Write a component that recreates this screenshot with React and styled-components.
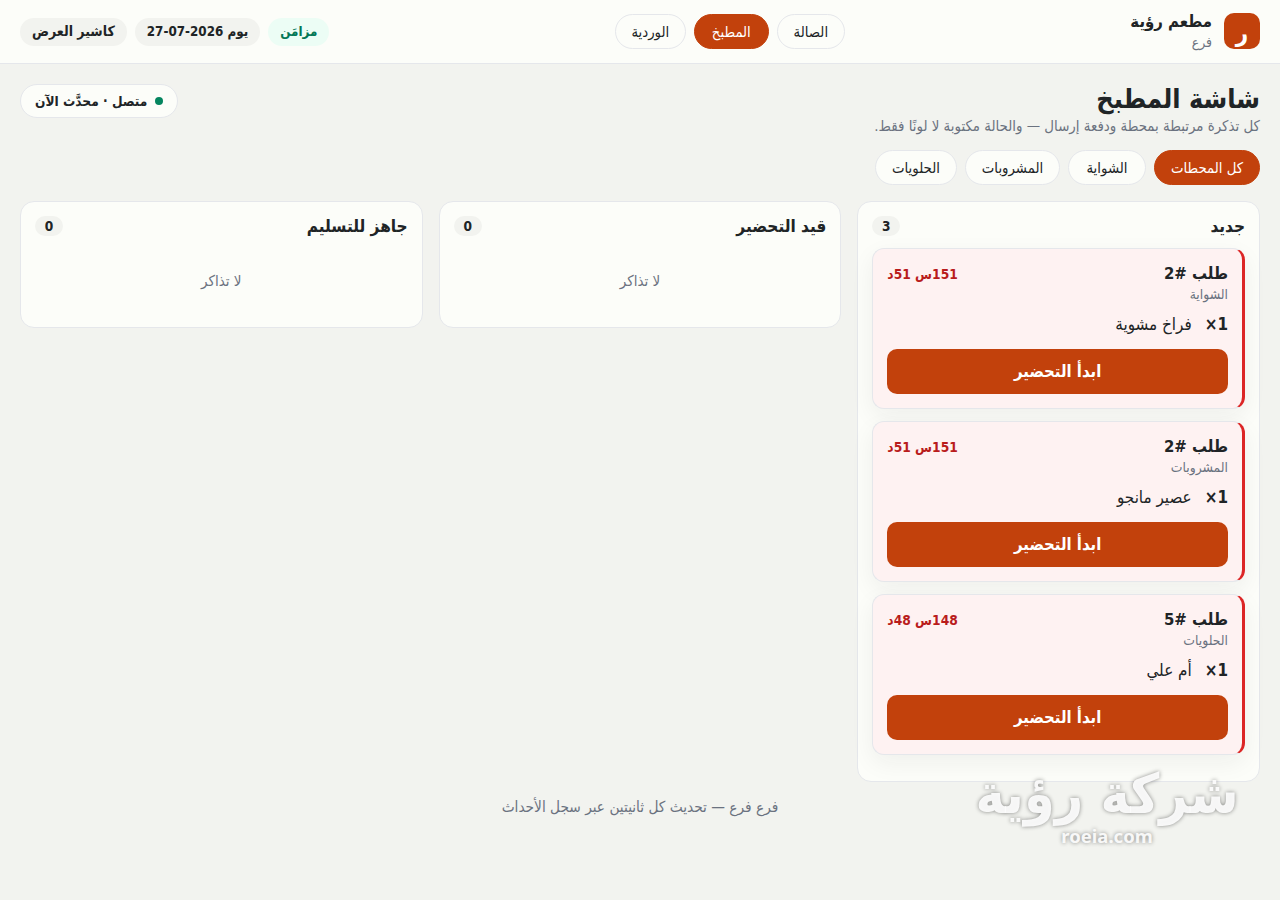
import React, { useState } from "react";
import styled, { createGlobalStyle } from "styled-components";

const GlobalStyle = createGlobalStyle`
  * { box-sizing: border-box; }

  body {
    margin: 0;
    min-height: 100vh;
    background: #f2f3ef;
    color: #202426;
    font-family: "DejaVu Sans Condensed", "DejaVu Sans", sans-serif;
    font-size: 16px;
    line-height: 1.5;
    overflow: hidden;
  }

  button { font-family: inherit; cursor: pointer; }
`;

const TopBar = styled.header`
  height: 64px;
  padding: 0 20px;
  display: flex;
  align-items: center;
  justify-content: space-between;
  background: #fcfdf9;
  border-bottom: 1px solid #e5e7eb;
`;

const Brand = styled.div`
  display: flex;
  align-items: center;
  gap: 12px;
`;

const Logo = styled.div`
  width: 36px;
  height: 36px;
  margin-bottom: 2px;
  padding-top: 4px;
  display: grid;
  place-items: center;
  border-radius: 10px;
  background: #c2410c;
  color: #fff;
  font-size: 24px;
  font-weight: 700;
  line-height: 32px;
`;

const BrandName = styled.div`
  font-size: 16.6px;
  font-weight: 600;
  line-height: 22px;
`;

const BranchName = styled.div`
  margin-top: -1px;
  font-size: 13.8px;
  line-height: 20px;
  color: #6b7280;
`;

const PillRow = styled.div`
  display: flex;
  gap: 8px;
`;

const Pill = styled.button`
  width: ${(p) => p.$width}px;
  height: 35px;
  padding: 2px 0 0;
  border: 1px solid ${(p) => (p.$active ? "#c2410c" : "#e5e7eb")};
  border-radius: 999px;
  background: ${(p) => (p.$active ? "#c2410c" : "#fcfdf9")};
  color: ${(p) => (p.$active ? "#fff" : "#202426")};
  font-size: 14.8px;
  line-height: 1.5;
`;

const Badge = styled.span`
  height: 28px;
  padding: 0 12px;
  display: flex;
  align-items: center;
  border-radius: 999px;
  background: ${(p) => (p.$synced ? "#ecfdf5" : "#f2f3ef")};
  color: ${(p) => (p.$synced ? "#047857" : "#202426")};
  font-size: ${(p) => p.$size || 13.3}px;
  font-weight: 600;
`;

const Main = styled.main`
  padding: 20px;
`;

const PageHead = styled.div`
  height: 51px;
  display: flex;
  justify-content: space-between;
  align-items: flex-start;
`;

const Title = styled.h1`
  margin: 0;
  font-size: 26.8px;
  font-weight: 700;
  line-height: 30px;
`;

const Subtitle = styled.p`
  margin: 2px 0 0;
  font-size: 14.88px;
  line-height: 21px;
  color: #6b7280;
`;

const LiveStatus = styled.div`
  height: 34px;
  padding: 0 14px;
  display: flex;
  align-items: center;
  gap: 8px;
  border: 1px solid #e5e7eb;
  border-radius: 999px;
  background: #fcfdf9;
  font-size: 13.6px;
  font-weight: 600;
`;

const Dot = styled.span`
  width: 8px;
  height: 8px;
  border-radius: 50%;
  background: #04855f;
`;

const Stations = styled(PillRow)`
  margin: 15px 0 16px;
`;

const Board = styled.div`
  display: grid;
  grid-template-columns: repeat(3, 1fr);
  gap: 16px;
  align-items: start;
`;

const Column = styled.section`
  padding: 14px;
  border: 1px solid #e5e7eb;
  border-radius: 14px;
  background: #fcfdf9;
`;

const ColumnHead = styled.div`
  height: 20px;
  margin-bottom: 12px;
  display: flex;
  align-items: center;
  justify-content: space-between;
`;

const ColumnTitle = styled.h2`
  margin: 0;
  font-size: 17.1px;
  font-weight: 600;
  line-height: 20px;
`;

const Count = styled.span`
  min-width: 28px;
  height: 20px;
  border-radius: 999px;
  background: #f2f3ef;
  font-size: 13.6px;
  font-weight: 700;
  line-height: 21px;
  text-align: center;
`;

const Empty = styled.p`
  margin: 0;
  padding: 23px 0 21px;
  font-size: 15px;
  line-height: 21px;
  color: #6b7280;
  text-align: center;
`;

const Ticket = styled.article`
  height: 161px;
  margin-bottom: 12px;
  padding: 14px;
  border: 1px solid #e5e7eb;
  border-inline-start: 3px solid #dc2626;
  border-radius: 12px;
  background: #fef2f2;
  box-shadow: 0 8px 24px rgba(31, 35, 40, 0.06);
`;

const TicketHead = styled.div`
  height: 22px;
  display: flex;
  align-items: center;
  justify-content: space-between;
`;

const OrderNo = styled.strong`
  font-size: 16.6px;
  font-weight: 700;
  line-height: 22px;
`;

const Elapsed = styled.span`
  font-size: 13.7px;
  font-weight: 700;
  color: #b91c1c;
`;

const Station = styled.div`
  margin: -1px 0 9px;
  font-size: 13.8px;
  line-height: 20px;
  color: #6b7280;
`;

const Item = styled.div`
  height: 24px;
  margin-bottom: 12px;
  display: flex;
  align-items: center;
  gap: 13px;
  font-size: 16.9px;
`;

const Action = styled.button`
  width: 100%;
  height: 45px;
  padding: 0;
  border: 0;
  border-radius: 10px;
  background: #c2410c;
  color: #fff;
  font-size: 16.6px;
  font-weight: 600;
`;

const Footer = styled.footer`
  margin-top: 14px;
  font-size: 15.25px;
  line-height: 22px;
  color: #6b7280;
  text-align: center;
`;

const Watermark = styled.div`
  position: absolute;
  top: 762px;
  right: 42px;
  width: 262px;
  display: flex;
  flex-direction: column;
  align-items: center;
  color: rgba(252, 252, 252, 0.95);
  font-weight: 700;
  text-shadow: 0 0 4px rgba(0, 0, 0, 0.45);
  white-space: nowrap;
`;

const WatermarkName = styled.div`
  font-size: 55px;
  line-height: 64px;
`;

const WatermarkSite = styled.div`
  font-family: "Noto Sans", sans-serif;
  font-size: 18.5px;
  line-height: 20px;
`;

const pages = [
  { name: "الصالة", width: 68 },
  { name: "المطبخ", width: 75 },
  { name: "الوردية", width: 71 },
];

const stations = [
  { name: "كل المحطات", width: 106 },
  { name: "الشواية", width: 78 },
  { name: "المشروبات", width: 95 },
  { name: "الحلويات", width: 82 },
];

const columns = [
  {
    title: "جديد",
    tickets: [
      { order: 2, station: "الشواية", item: "فراخ مشوية", elapsed: "151س 51د" },
      { order: 2, station: "المشروبات", item: "عصير مانجو", elapsed: "151س 51د" },
      { order: 5, station: "الحلويات", item: "أم علي", elapsed: "148س 48د" },
    ],
  },
  { title: "قيد التحضير", tickets: [] },
  { title: "جاهز للتسليم", tickets: [] },
];

const TicketCard = ({ ticket }) => (
  <Ticket>
    <TicketHead>
      <OrderNo>طلب #{ticket.order}</OrderNo>
      <Elapsed>{ticket.elapsed}</Elapsed>
    </TicketHead>
    <Station>{ticket.station}</Station>
    <Item>
      <b>1×</b>
      <span>{ticket.item}</span>
    </Item>
    <Action>ابدأ التحضير</Action>
  </Ticket>
);

const App = () => {
  const [page, setPage] = useState("المطبخ");
  const [station, setStation] = useState("كل المحطات");

  return (
    <div dir="rtl" lang="ar">
      <GlobalStyle />
      <TopBar>
        <Brand>
          <Logo>ر</Logo>
          <div>
            <BrandName>مطعم رؤية</BrandName>
            <BranchName>فرع</BranchName>
          </div>
        </Brand>
        <PillRow>
          {pages.map(({ name, width }) => (
            <Pill key={name} $width={width} $active={name === page} onClick={() => setPage(name)}>
              {name}
            </Pill>
          ))}
        </PillRow>
        <PillRow>
          <Badge $synced>مزامَن</Badge>
          <Badge>يوم 2026-07-27</Badge>
          <Badge $size={14}>كاشير العرض</Badge>
        </PillRow>
      </TopBar>

      <Main>
        <PageHead>
          <div>
            <Title>شاشة المطبخ</Title>
            <Subtitle>كل تذكرة مرتبطة بمحطة ودفعة إرسال — والحالة مكتوبة لا لونًا فقط.</Subtitle>
          </div>
          <LiveStatus>
            <Dot />
            متصل · محدَّث الآن
          </LiveStatus>
        </PageHead>
        <Stations>
          {stations.map(({ name, width }) => (
            <Pill key={name} $width={width} $active={name === station} onClick={() => setStation(name)}>
              {name}
            </Pill>
          ))}
        </Stations>
        <Board>
          {columns.map((column) => (
            <Column key={column.title}>
              <ColumnHead>
                <ColumnTitle>{column.title}</ColumnTitle>
                <Count>{column.tickets.length}</Count>
              </ColumnHead>
              {column.tickets.length === 0 && <Empty>لا تذاكر</Empty>}
              {column.tickets.map((ticket) => (
                <TicketCard key={ticket.station} ticket={ticket} />
              ))}
            </Column>
          ))}
        </Board>
        <Footer>فرع فرع — تحديث كل ثانيتين عبر سجل الأحداث</Footer>
      </Main>

      <Watermark>
        <WatermarkName>شركة رؤية</WatermarkName>
        <WatermarkSite>roeia.com</WatermarkSite>
      </Watermark>
    </div>
  );
};

export default App;
